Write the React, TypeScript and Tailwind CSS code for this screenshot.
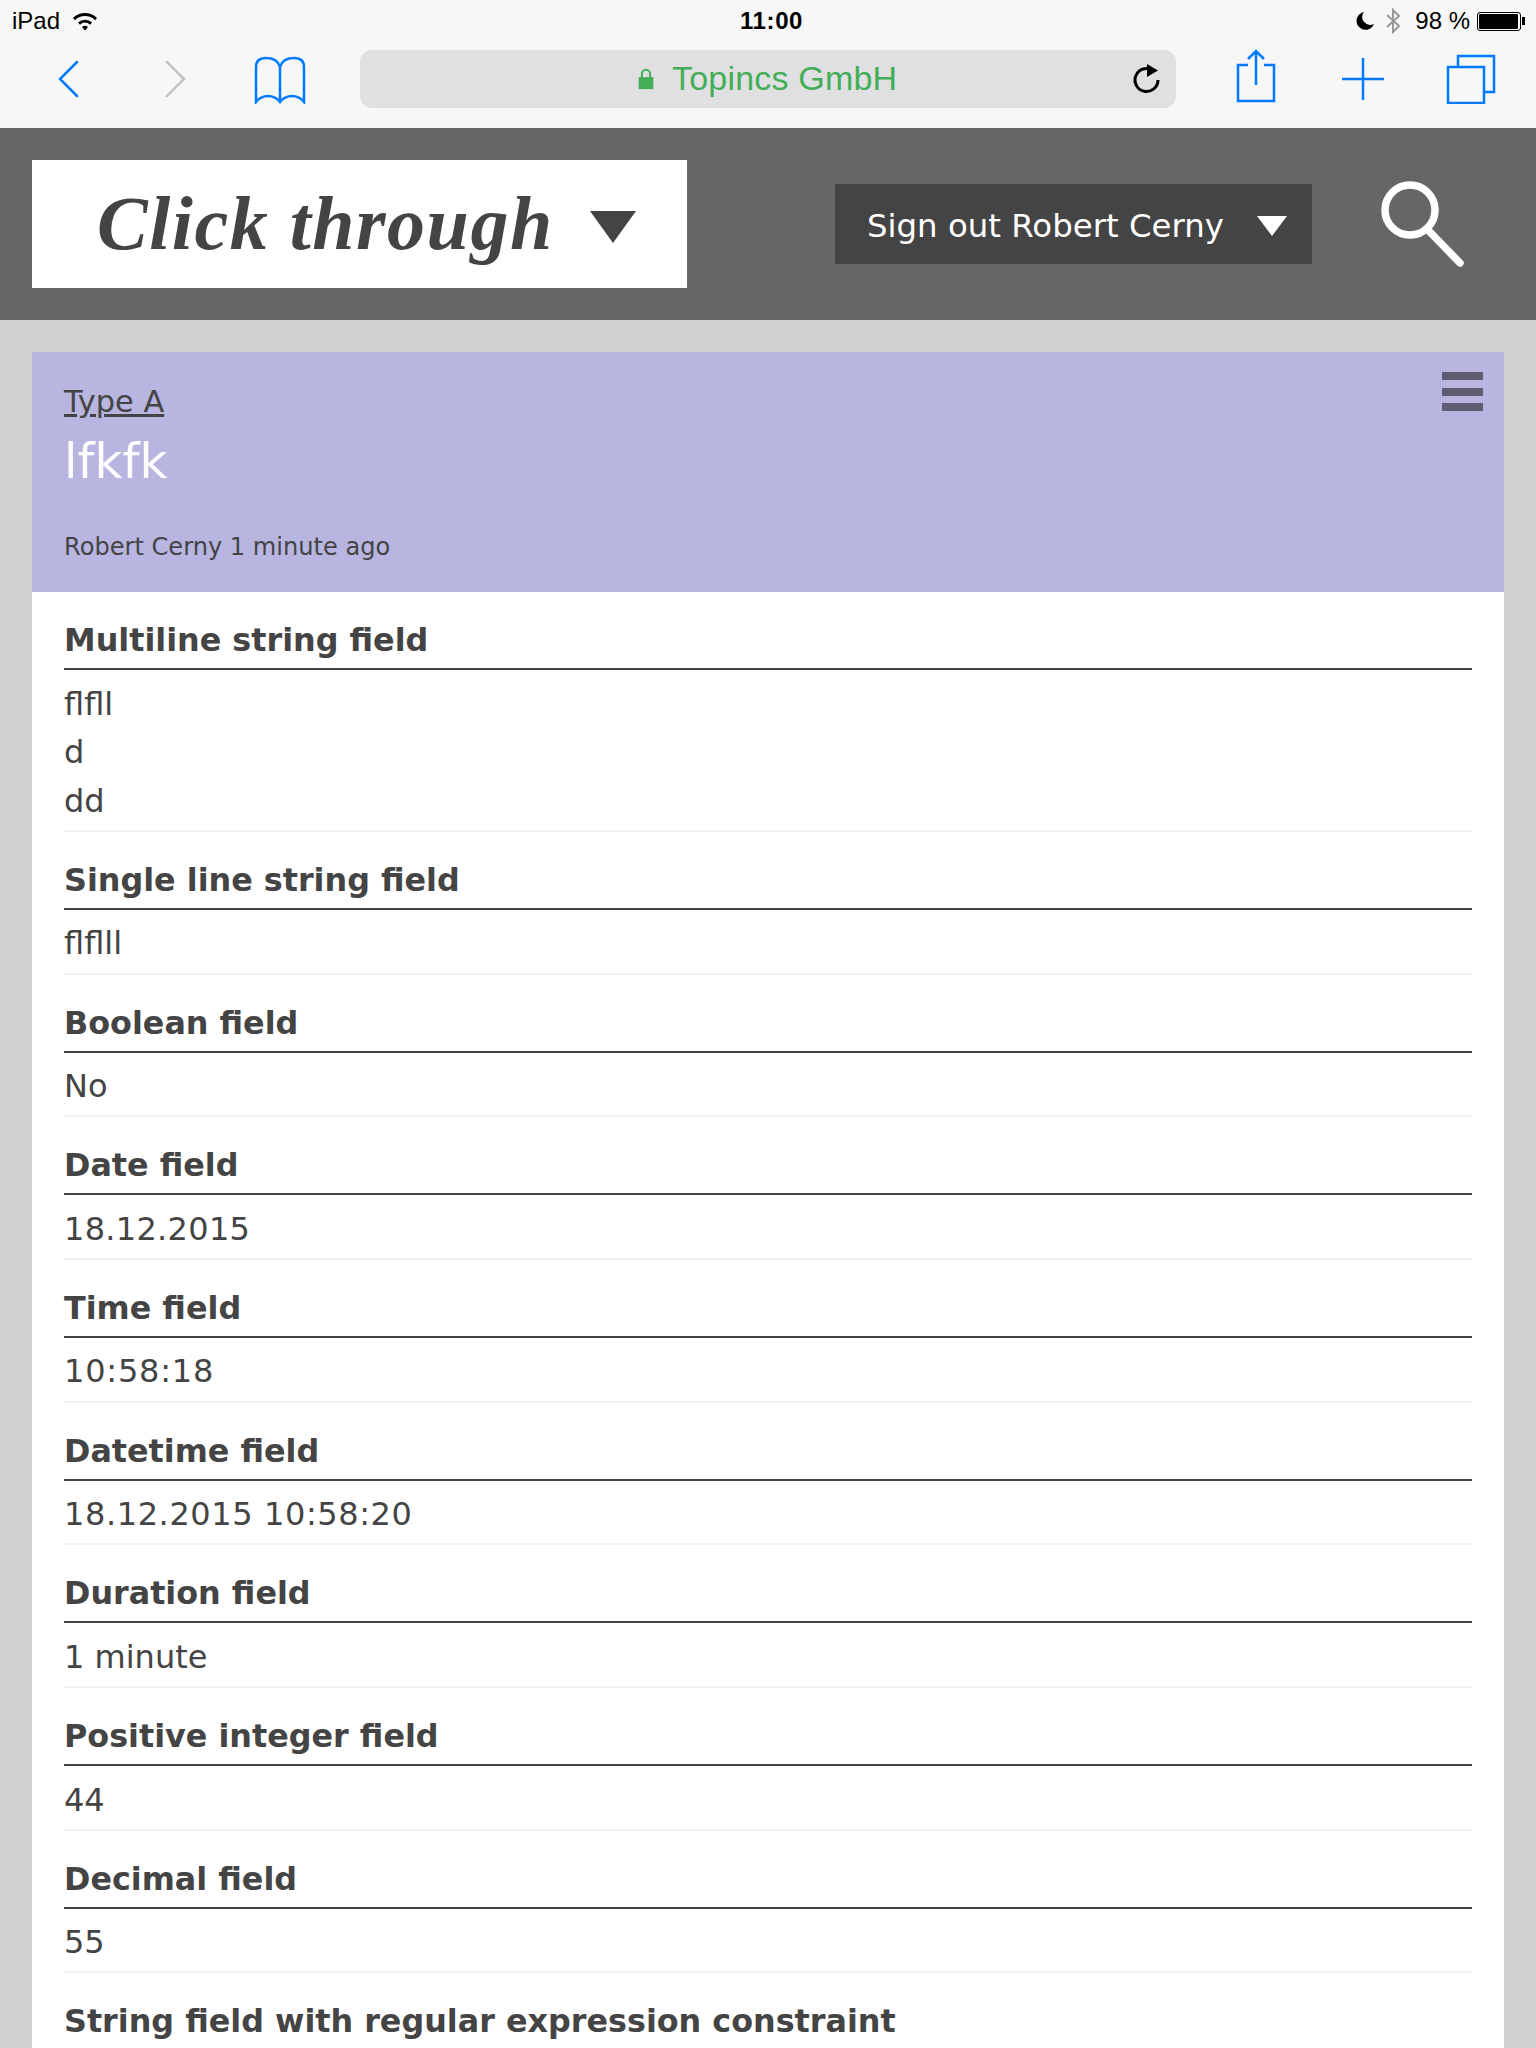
const sans = "font-['DejaVu_Sans',sans-serif]";

// tracking per value: digits and colons run wider in the original font
const fields = [
  { label: "Multiline string field", lines: ["flfll", "d", "dd"], track: "" },
  { label: "Single line string field", lines: ["flflll"], track: "" },
  { label: "Boolean field", lines: ["No"], track: "" },
  { label: "Date field", lines: ["18.12.2015"], track: "tracking-[0.3px]" },
  { label: "Time field", lines: ["10:58:18"], track: "tracking-[0.8px]" },
  { label: "Datetime field", lines: ["18.12.2015 10:58:20"], track: "tracking-[0.6px]" },
  { label: "Duration field", lines: ["1 minute"], track: "" },
  { label: "Positive integer field", lines: ["44"], track: "" },
  { label: "Decimal field", lines: ["55"], track: "" },
  { label: "String field with regular expression constraint", lines: [], track: "" },
];

function SafariBar() {
  return (
    <div className="h-[128px] bg-[#f7f7f7] font-['Liberation_Sans',sans-serif] text-black">
      <div className="h-[42px] mb-[7px] flex items-center justify-between pl-[12px] pr-[11px] text-[24px] relative">
        <div className="flex items-center gap-[12px]">
          <span>iPad</span>
          <svg width="26" height="20" viewBox="0 0 26 20">
            <path d="M1 7a17 17 0 0 1 24 0l-2 2.200a14 14 0 0 0-20 0z" />
            <path d="M6 11.500a10 10 0 0 1 14 0l-2 2.200a7 7 0 0 0-10 0z" />
            <path d="M10 16a4.500 4.500 0 0 1 6 0l-3 3.500z" />
          </svg>
        </div>
        <span className="absolute left-[740px] top-[3px] font-semibold tracking-[0.6px]">11:00</span>
        <div className="flex items-center">
          <svg width="20" height="20" viewBox="0 0 20 20">
            <path d="M9 1a9 9 0 1 0 10 12 8 8 0 0 1-10-12z" />
          </svg>
          <svg className="ml-[10px]" width="16" height="26" viewBox="0 0 16 26" fill="none" stroke="#999" strokeWidth="2">
            <path d="M2 7l12 11-6 6V2l6 6-12 11" />
          </svg>
          <span className="ml-[14px]">98 %</span>
          <div className="ml-[7px] w-[48px] h-[20px] flex items-center">
            <div className="w-[44px] h-[19px] border border-black rounded-[3px] p-[1px]">
              <div className="h-full w-[97%] bg-black rounded-[1px]" />
            </div>
            <div className="w-[3px] h-[8px] bg-black ml-[1px]" />
          </div>
        </div>
      </div>
      <div className="flex items-center">
        <svg className="ml-[57px]" width="24" height="38" viewBox="0 0 24 38" fill="none" stroke="#007aff" strokeWidth="2.500" strokeLinecap="round">
          <path d="M20 2L3 19l17 17" />
        </svg>
        <svg className="ml-[82px]" width="24" height="38" viewBox="0 0 24 38" fill="none" stroke="#c4c4c4" strokeWidth="2.500" strokeLinecap="round">
          <path d="M4 2l17 17L4 36" />
        </svg>
        <svg className="ml-[67px] mt-[3px]" width="52" height="48" viewBox="0 0 52 48" fill="none" stroke="#007aff" strokeWidth="2.500">
          <path d="M26 11C24 4 18 2 12 2 6 2 2 5 2 11v35c6-8 18-8 24 0 6-8 18-8 24 0V11c0-6-4-9-10-9-6 0-12 2-14 9zM26 11v35" />
        </svg>
        <div className="ml-[54px] w-[816px] h-[58px] rounded-[12px] bg-[#e0e0e2] flex items-center relative">
          <svg className="ml-[277px]" width="18" height="22" viewBox="0 0 18 24">
            <path fill="none" stroke="#43ae57" strokeWidth="2.200" d="M4.500 11V6.500a4.500 4.500 0 0 1 9 0V11" />
            <rect x="1" y="10" width="16" height="13" fill="#43ae57" />
          </svg>
          <span className="ml-[17px] text-[34px] text-[#43ae57] tracking-[0.2px]">Topincs GmbH</span>
          <svg className="absolute right-[14px] top-[12px]" width="30" height="34" viewBox="0 0 30 34" fill="none" stroke="#000" strokeWidth="3">
            <path d="M21 8.500A11.500 11.500 0 1 0 26 18" />
            <path fill="#000" stroke="none" d="M15 2l11 6.500L15 15z" />
          </svg>
        </div>
        <svg className="ml-[60px] mb-[5px]" width="40" height="54" viewBox="0 0 40 54" fill="none" stroke="#007aff" strokeWidth="2.500">
          <path d="M12 16H2v36h36V16H28" />
          <path d="M20 36V3M12 10l8-8 8 8" />
        </svg>
        <svg className="ml-[65px]" width="44" height="44" viewBox="0 0 44 44" fill="none" stroke="#007aff" strokeWidth="2.500">
          <path d="M22 1v42M1 22h42" />
        </svg>
        <svg className="ml-[61px]" width="50" height="50" viewBox="0 0 50 50" fill="none" stroke="#007aff" strokeWidth="2.500">
          <path d="M2 13h36v36H2z" />
          <path d="M12 13V2h36v36H39" />
        </svg>
      </div>
    </div>
  );
}

function SiteHeader() {
  return (
    <div className={`h-[192px] bg-[#666666] flex items-center pl-[32px] ${sans}`}>
      <div className="w-[655px] h-[128px] bg-white flex items-center pl-[65px]">
        <span className="font-['Liberation_Serif',serif] font-bold italic text-[76px] tracking-[1.5px] text-[#444444] mb-[3px]">Click through</span>
        <div className="ml-[36px] mt-[5px] w-0 h-0 border-x-[23px] border-x-transparent border-t-[32px] border-t-[#444444]" />
      </div>
      <div className="ml-[148px] w-[477px] h-[80px] bg-[#444444] flex items-center pl-[32px] pt-[4px] text-white text-[32.4px]">
        <span>Sign out Robert Cerny</span>
        <div className="ml-[33px] w-0 h-0 border-x-[15px] border-x-transparent border-t-[20px] border-t-white" />
      </div>
      <svg className="ml-[69px]" width="84" height="86" viewBox="0 0 84 86" fill="none" stroke="#fff" strokeWidth="7.500" strokeLinecap="round">
        <circle cx="29" cy="29" r="25" />
        <path d="M47 49l32 33" />
      </svg>
    </div>
  );
}

export default function App() {
  return (
    <div className="w-[1536px] h-[2048px] overflow-hidden bg-[#d0d0d0]">
      <SafariBar />
      <SiteHeader />
      <div className={`mx-[32px] mt-[32px] bg-white text-[#444444] ${sans}`}>
        <div className="h-[240px] bg-[#b8b5e0] relative pl-[32px] pt-[30px]">
          <a className="block w-fit text-[30.4px] leading-[40px] underline">Type A</a>
          <h1 className="text-[48.3px] leading-[64px] text-white mt-[7px]">lfkfk</h1>
          <p className="text-[24.1px] leading-[32px] mt-[38px]">Robert Cerny 1 minute ago</p>
          <div className="absolute right-[21px] top-[20px] flex flex-col gap-[7.5px]">
            <div className="w-[41px] h-[8px] bg-[#5f5c74]" />
            <div className="w-[41px] h-[8px] bg-[#5f5c74]" />
            <div className="w-[41px] h-[8px] bg-[#5f5c74]" />
          </div>
        </div>
        <div className="px-[32px]">
          {fields.map((f) => (
            <div key={f.label} className="pt-[24px]">
              <div className="text-[31.8px] leading-[48px] h-[48px] pb-[4px] box-content font-bold border-b-2 border-[#444444]">{f.label}</div>
              <div className="pt-[9.5px] pb-[4.600px] border-b-2 border-[#f2f2f2]">
                {f.lines.map((l, i) => (
                  <div key={i} className={`text-[32px] leading-[48.6px] ${f.track}`}>{l}</div>
                ))}
              </div>
            </div>
          ))}
        </div>
      </div>
    </div>
  );
}
